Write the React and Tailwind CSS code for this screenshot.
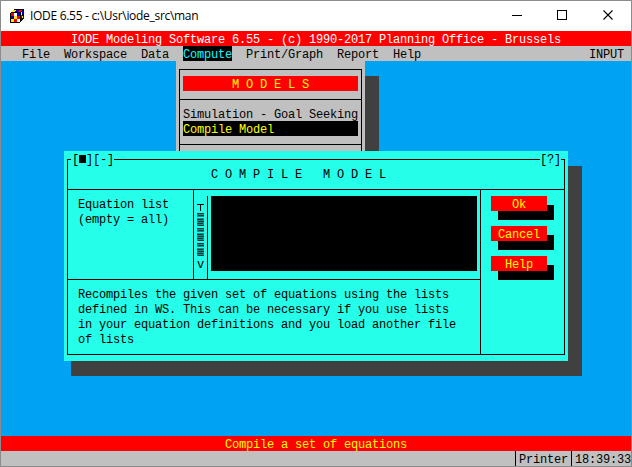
import React from "react";

const mono = "font-['Courier_New','Liberation_Mono',monospace] text-[12px] leading-[19px] tracking-[-0.2012px] whitespace-pre";

const cube = { y: "#ffe800", r: "#ff0000", b: "#0000e0", w: "#ffffff" };
const front = ["rwb", "byr", "yrw"];

function CubeIcon() {
  return (
    <svg className="h-[14px] w-[14px]" viewBox="0 0 14 14" shapeRendering="crispEdges">
      <path d="M0 4L4 0H14V9L10 13V14H0Z" fill="#000" />
      {front.map((row, y) =>
        row.split("").map((c, x) => (
          <rect key={`${x}-${y}`} x={1 + x * 3} y={4 + y * 3} width="3" height="3" fill={cube[c]} />
        ))
      )}
      <path d="M3 1h3v1h-3zM2 2h3v1h-3z" fill={cube.y} />
      <path d="M6 1h3v1h-3zM5 2h3v1h-3z" fill={cube.b} />
      <path d="M9 1h3v1h-3zM8 2h3v1h-3z" fill={cube.r} />
      <path d="M11 3h1v3h-1zM12 7h1v2h-1z" fill={cube.y} />
      <path d="M12 2h1v3h-1zM11 8h1v3h-1z" fill={cube.b} />
      <path d="M11 6h1v2h-1z" fill={cube.r} />
    </svg>
  );
}

function TitleBar() {
  return (
    <div className="flex h-[30px] items-center bg-white pl-[9px] text-black">
      <CubeIcon />
      <span className="ml-[6px] flex-1 font-['Segoe_UI','Open_Sans',sans-serif] text-[12px] leading-4 tracking-[-0.3px]">
        IODE 6.55 - c:\Usr\iode_src\man
      </span>
      <svg className="h-[30px] w-[138px]" viewBox="0 0 138 30" fill="none" stroke="#000" shapeRendering="crispEdges">
        <path d="M19 14.5h10" />
        <rect x="64.5" y="9.5" width="9" height="9" />
        <path d="M110.5 9.5l9 9M119.5 9.5l-9 9" shapeRendering="auto" strokeWidth="1.1" />
      </svg>
    </div>
  );
}

function ModelsMenu() {
  return (
    <div className="absolute left-[175px] top-[30px] h-[105px] w-[189px] bg-[#c0c0c0] px-[3px] pt-2 shadow-[14px_15px_0_#404040]">
      <div className="h-full border border-b-0 border-black">
        <div className="mx-[3px] mt-[6px] h-[15px] bg-[#ff0000] text-center text-[#ffff00]">M O D E L S</div>
        <div className="mt-2 h-px bg-black" />
        <div className="mx-[3px] mt-[6px]">
          <div className="h-[15px]">Simulation - Goal Seeking</div>
          <div className="h-[15px] bg-black text-[#ffff00]">Compile Model</div>
        </div>
        <div className="mt-2 h-px bg-black" />
      </div>
    </div>
  );
}

function DialogButton({ children }) {
  return (
    <button className="block h-[15px] w-14 bg-[#ff0000] text-center text-[#ffff00] shadow-[7px_9px_0_#000]">
      <span className="block h-[15px]">{children}</span>
    </button>
  );
}

function ScrollTrack() {
  return (
    <svg className="h-[45px] w-[7px] shrink-0" viewBox="0 0 7 45" shapeRendering="crispEdges">
      {[0, 15, 30].map((y) => (
        <g key={y}>
          <path d={`M0 ${y + 2}h7v4h-7zM0 ${y + 7}h7v8h-7z`} fill="#129288" />
          <path
            d={`M0 ${y + 2}h7v1h-7zM1 ${y + 4}h6v1h-6zM0 ${y + 8}h6v1h-6zM1 ${y + 10}h6v1h-6zM0 ${y + 12}h6v1h-6zM1 ${y + 14}h6v1h-6z`}
            fill="#06383f"
          />
        </g>
      ))}
    </svg>
  );
}

function CompileDialog() {
  return (
    <div className="absolute left-[63px] top-[120px]">
      <div className="absolute left-[7px] top-[15px] h-[210px] w-[511px] bg-[#404040]" />
      <div className="relative h-[210px] w-[504px] bg-[#25ffe9] px-[3px] pb-[6px] pt-2">
        <div className="flex h-[196px] w-[498px] flex-col border border-black">
          <div className="h-[30px] border-b border-black pl-[143px] pt-[6px]">C O M P I L E   M O D E L</div>
          <div className="flex flex-1">
            <div className="flex w-[412px] flex-col">
              <div className="flex h-[90px] border-b border-black">
                <div className="w-[125px] pl-[10px] pt-[6px]">
                  <div className="h-[15px]">Equation list</div>
                  <div className="h-[15px]">(empty = all)</div>
                </div>
                <div className="flex w-[14px] flex-col border-l border-black pl-[3px] pt-[6px]">
                  <span className="flex h-[15px] w-[7px] flex-col items-center pt-2">
                    <i className="block h-px w-[7px] bg-black" />
                    <i className="block h-[6px] w-px bg-black" />
                  </span>
                  <ScrollTrack />
                  <span className="h-[15px]">v</span>
                </div>
                <div className="mt-[6px] w-[4px] border-l border-black" />
                <div className="mt-[6px] h-[75px] w-[266px] bg-black" />
              </div>
              <div className="pl-[10px] pt-[6px]">
                <div className="h-[15px]">Recompiles the given set of equations using the lists</div>
                <div className="h-[15px]">defined in WS. This can be necessary if you use lists</div>
                <div className="h-[15px]">in your equation definitions and you load another file</div>
                <div className="h-[15px]">of lists</div>
              </div>
            </div>
            <div className="flex flex-1 flex-col gap-[15px] border-l border-black pl-[10px] pt-[6px]">
              <DialogButton>Ok</DialogButton>
              <DialogButton>Cancel</DialogButton>
              <DialogButton>Help</DialogButton>
            </div>
          </div>
        </div>
        <div className="absolute left-[7px] top-0 flex h-[15px] bg-[#25ffe9] pl-px">
          <span className="flex w-[21px]">
            [<i className="mt-1 block h-2 w-[7px] shrink-0 bg-black" />]
          </span>
          <span>[-]</span>
        </div>
        <div className="absolute right-[7px] top-0 h-[15px] bg-[#25ffe9]">[?]</div>
      </div>
    </div>
  );
}

export default function App() {
  return (
    <div className="flex h-[467px] w-[632px] flex-col overflow-hidden border border-[#8c8c8c] bg-[#c0c0c0]">
      <TitleBar />
      <div className={`relative flex flex-1 flex-col text-black ${mono}`}>
        <div className="h-[15px] bg-[#ff0000] pl-[70px] text-white">
          IODE Modeling Software 6.55 - (c) 1990-2017 Planning Office - Brussels
        </div>
        <nav className="flex h-[15px] gap-[14px] bg-[#c0c0c0] pl-[21px] pr-[7px]">
          <span>File</span>
          <span>Workspace</span>
          <span>Data</span>
          <span className="bg-black text-[#00ffff]">Compute</span>
          <span>Print/Graph</span>
          <span>Report</span>
          <span>Help</span>
          <span className="ml-auto">INPUT</span>
        </nav>
        <main className="flex-1 bg-[#00a2f2]" />
        <div className="h-[15px] bg-[#ff0000] pl-[224px] text-[#ffff00]">Compile a set of equations</div>
        <footer className="flex h-[15px] justify-end">
          <span className="border-l border-black pl-[3px]">Printer</span>
          <span className="ml-[3px] border-l border-black pl-[3px]">18:39:33</span>
        </footer>
        <ModelsMenu />
        <CompileDialog />
      </div>
    </div>
  );
}
